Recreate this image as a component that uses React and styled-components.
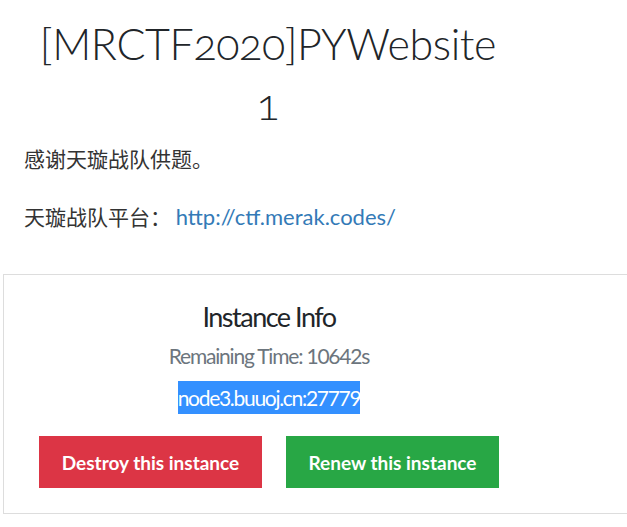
import React from 'react';
import styled, { createGlobalStyle } from 'styled-components';

const GlobalStyle = createGlobalStyle`
  html, body {
    margin: 0;
    padding: 0;
    background: #fff;
  }
  body {
    font-family: "Lato", "Noto Sans CJK SC", sans-serif;
    color: #212529;
  }
`;

const Page = styled.div`
  width: 530px;
  padding-left: 3px;
  padding-top: 14px;
`;

const Title = styled.h1`
  margin: 0;
  padding: 0 20px;
  text-align: center;
  font-family: "Lato", sans-serif;
  font-weight: 300;
  font-size: 43px;
  line-height: 60px;
  letter-spacing: -0.4px;
  font-variant-numeric: oldstyle-nums;
  color: #212529;
`;

const Description = styled.div`
  padding: 0 21px;
  margin-top: 9px;
`;

const Para = styled.p`
  margin: 0 0 28px;
  font-family: "Noto Sans CJK SC", sans-serif;
  font-weight: 400;
  font-size: 21px;
  line-height: 30px;
  color: #333;
  &:last-child {
    margin-bottom: 0;
  }
`;

const Link = styled.a`
  font-family: "Lato", sans-serif;
  font-size: 22px;
  color: #337ab7;
  text-decoration: none;
`;

const Card = styled.div`
  margin: 42px 0 0 3px;
  border: 1px solid #dddddd;
  border-right: none;
  box-sizing: border-box;
  padding: 25px 0 25px;
`;

const CardBody = styled.div`
  width: 530px;
  display: flex;
  flex-direction: column;
  align-items: center;
  text-align: center;
`;

const CardTitle = styled.h4`
  margin: 0;
  font-weight: 400;
  font-size: 27px;
  line-height: 34px;
  letter-spacing: -1.5px;
  color: #212529;
`;

const Remaining = styled.div`
  margin-top: 9px;
  font-size: 21px;
  line-height: 26px;
  letter-spacing: -1.2px;
  color: #6c757d;
`;

const Host = styled.span`
  margin-top: 12px;
  display: inline-block;
  font-size: 21px;
  line-height: 33px;
  letter-spacing: -1.3px;
  background: #3390ff;
  color: #fff;
`;

const Buttons = styled.div`
  display: flex;
  justify-content: center;
  gap: 24px;
  margin-top: 22px;
`;

const Button = styled.button`
  height: 52px;
  width: ${(p) => p.$width}px;
  padding: 0;
  border: none;
  border-radius: 0;
  background: ${(p) => p.$color};
  color: #fff;
  font-family: "Lato", sans-serif;
  font-weight: 700;
  font-size: 19px;
  letter-spacing: 0;
  cursor: pointer;
`;

export default function App() {
  return (
    <>
      <GlobalStyle />
      <Page>
        <Title>[MRCTF2020]PYWebsite 1</Title>
        <Description>
          <Para>感谢天璇战队供题。</Para>
          <Para>
            天璇战队平台： <Link href="#">http://ctf.merak.codes/</Link>
          </Para>
        </Description>
      </Page>
      <Card>
        <CardBody>
          <CardTitle>Instance Info</CardTitle>
          <Remaining>Remaining Time: 10642s</Remaining>
          <Host>node3.buuoj.cn:27779</Host>
          <Buttons>
            <Button $color="#dc3545" $width={223}>Destroy this instance</Button>
            <Button $color="#28a745" $width={213}>Renew this instance</Button>
          </Buttons>
        </CardBody>
      </Card>
    </>
  );
}
